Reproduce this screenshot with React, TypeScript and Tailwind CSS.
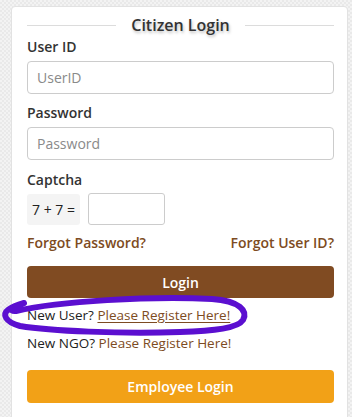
import React from "react";

function Label({ children }: { children: React.ReactNode }) {
  return (
    <label className="block h-[21px] text-[14px] font-semibold leading-[21px] text-[#333]">
      {children}
    </label>
  );
}

function Annotation() {
  return (
    <svg
      className="pointer-events-none absolute left-0 top-0"
      width="352"
      height="417"
      viewBox="0 0 352 417"
      fill="none"
      aria-hidden
    >
      <path
        d="M20 308 C12 304 8 312 16 311 C60 301 150 296 212 299 C240 301 248 311 243 320 C238 328 215 331 180 332 C120 334 50 331 20 326 C5 322 2 314 8 310 C12 307 17 305 24 303"
        stroke="#5b0fd0"
        strokeWidth="6"
        strokeLinecap="round"
        strokeLinejoin="round"
      />
    </svg>
  );
}

export default function App() {
  return (
    <div
      className="relative h-[417px] w-[352px] overflow-hidden bg-[#eeeeee] bg-[repeating-conic-gradient(#e9e9e9_0%_25%,#f3f3f3_0%_50%)] bg-[length:4px_4px] pl-[11px] pr-[4px] pt-[6px]"
      style={{ fontFamily: '"Open Sans", "Liberation Sans", sans-serif' }}
    >
      <div className="h-[430px] rounded-t-[4px] border border-[#e2e2e2] bg-white pl-[15px] pr-[13px] pt-[7px]">
        <div className="flex items-center gap-[15px]">
          <div className="h-px flex-1 bg-[#dcdcdc]" />
          <h3 className="text-[16px] font-semibold leading-[22px] text-[#333] [text-shadow:1px_2px_3px_rgba(0,0,0,0.25)]">
            Citizen Login
          </h3>
          <div className="h-px flex-1 bg-[#dcdcdc]" />
        </div>

        <div>
          <Label>User ID</Label>
          <input
            className="mt-[4px] block h-[33px] w-full rounded-[4px] border border-[#cccccc] px-[9px] text-[14px] text-[#555] outline-none placeholder:text-[#8a8a8a]"
            placeholder="UserID"
          />
        </div>

        <div className="mt-[8px]">
          <Label>Password</Label>
          <input
            type="password"
            className="mt-[4px] block h-[33px] w-full rounded-[4px] border border-[#cccccc] px-[9px] text-[14px] text-[#555] outline-none placeholder:text-[#8a8a8a]"
            placeholder="Password"
          />
        </div>

        <div className="mt-[9px]">
          <Label>Captcha</Label>
          <div className="mt-[3px] flex items-center gap-[8px]">
            <div className="flex h-[31px] w-[53px] items-center justify-center rounded-[3px] bg-[#f4f4f4] text-[14px] text-[#222]">
              7 + 7 =
            </div>
            <input className="block h-[32px] w-[77px] rounded-[3px] border border-[#cccccc] px-2 outline-none" />
          </div>
        </div>

        <div className="mt-[7px] flex items-center justify-between text-[14px] font-semibold leading-[21px] text-[#7d4b22]">
          <a>Forgot Password?</a>
          <a>Forgot User ID?</a>
        </div>

        <button className="mt-[13px] flex h-[32px] w-full items-center justify-center rounded-[4px] bg-[#804b22] text-[14px] font-semibold text-white">
          Login
        </button>

        <p className="mt-[7px] text-[13.5px] leading-[21px] text-[#222]">
          New User?{" "}
          <a className="text-[#7d4b22] underline underline-offset-[2px]">Please Register Here!</a>
        </p>
        <p className="mt-[7px] text-[13.5px] leading-[21px] text-[#222]">
          New NGO? <a className="text-[#7d4b22]">Please Register Here!</a>
        </p>

        <button className="mt-[16px] flex h-[33px] w-full items-center justify-center rounded-[4px] bg-[#f2a117] text-[14px] font-semibold text-white">
          Employee Login
        </button>
      </div>
      <Annotation />
    </div>
  );
}
